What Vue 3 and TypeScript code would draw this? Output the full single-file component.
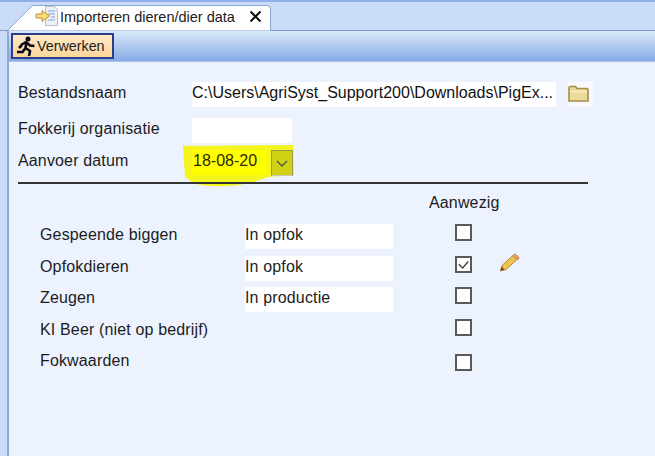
<template>
  <div class="screen">
    <div class="tabstrip">
      <div class="tab">
        <svg class="tab-shape" width="265" height="27" viewBox="0 0 265 27">
          <path d="M0.500 26.500L25.500 1.500H260Q263.500 1.500 263.500 5V26.500" fill="#fff" stroke="#8ba8d4" />
        </svg>
        <svg class="tab-icon" width="24" height="22" viewBox="0 0 24 22">
          <path d="M10.500 1.500h9l3 3v16h-12z" fill="#eef2f8" stroke="#b7bfcb" />
          <path d="M13 6h7M13 9h7M16 12h4M13 15h7" stroke="#7f9cc8" />
          <path d="M1 9h6V5.500l7.500 5.500L7 16.500V13H1z" fill="#f8d878" stroke="#c09430" />
        </svg>
        <span>Importeren dieren/dier data</span>
        <svg class="tab-close" width="13" height="13" viewBox="0 0 13 13">
          <path d="M1.500 1.500l10 10M11.500 1.500l-10 10" stroke="#111" stroke-width="2" />
        </svg>
      </div>
    </div>
    <div class="panel">
      <div class="toolbar">
        <button class="run-btn">
          <svg width="20" height="21" viewBox="0 0 20 21">
            <circle cx="12" cy="3" r="2.500" fill="#060618" />
            <path d="M5 9l5-3 4 3.500 4.500 0.500M10.500 6l-1 6 4.500 3-1 5M9.500 12l-3 4-5.500 0M6 9l-3 3" fill="none" stroke="#060618" stroke-width="2.600" />
          </svg>
          Verwerken
        </button>
      </div>
      <div class="content">
        <div class="form-row first">
          <label>Bestandsnaam</label>
          <div class="field file">C:\Users\AgriSyst_Support200\Downloads\PigEx...</div>
          <div class="folder-box">
            <svg width="21" height="18" viewBox="0 0 21 18">
              <path d="M1 16V3Q1 1.500 2.500 1.500h5L9 3.500h9.500Q20 3.500 20 5v11z" fill="#e8dc9a" stroke="#a98a45" stroke-width="1.600" />
              <path d="M2 6.500h17" stroke="#f7f0c4" stroke-width="1.400" />
            </svg>
          </div>
        </div>
        <div class="form-row second">
          <label>Fokkerij organisatie</label>
          <div class="field org"></div>
        </div>
        <div class="form-row date">
          <label>Aanvoer datum</label>
          <div class="date-wrap">
            <svg class="marker" width="120" height="50" viewBox="0 0 120 50">
              <path d="M3 4L113 3l1 30-26 2-18 6Q40 47 15 42L5 35z" fill="#f4f41e" />
              <rect x="12" y="8" width="75" height="25" fill="#ffff00" />
            </svg>
            <span class="date-text">18-08-20</span>
            <span class="date-btn">
              <svg width="12" height="7" viewBox="0 0 12 7">
                <path d="M1 1l5 5 5-5" fill="none" stroke="#555" stroke-width="1.400" />
              </svg>
            </span>
          </div>
        </div>
        <div class="divider"></div>
        <div class="present-head">Aanwezig</div>
        <div v-for="row in rows" :key="row.name" class="animal-row">
          <span class="animal-name">{{ row.name }}</span>
          <div class="animal-type" :class="{ empty: !row.type }">{{ row.type }}</div>
          <span class="check">
            <svg v-if="row.checked" width="15" height="13" viewBox="0 0 15 13">
              <path d="M2 6l4.500 4.500L13 3" fill="none" stroke="#444" stroke-width="1.600" />
            </svg>
          </span>
          <svg v-if="row.checked" class="pencil" width="21" height="19" viewBox="0 0 21 19">
            <path d="M3 12.500L14 2.500l4 4L7 16.500 1.500 18z" fill="#f3c24e" stroke="#b9863a" />
            <path d="M14 2.500l1-1q1-.8 2 0l2.500 2.500q.8 1 0 2L18 6.500z" fill="#f0a08a" stroke="#b9863a" />
            <path d="M1.500 18l1-4.500 3 3z" fill="#6b4b2a" />
          </svg>
        </div>
      </div>
    </div>
  </div>
</template>

<script setup lang="ts">
interface AnimalRow {
  name: string
  type: string
  checked: boolean
}

const rows: AnimalRow[] = [
  { name: 'Gespeende biggen', type: 'In opfok', checked: false },
  { name: 'Opfokdieren', type: 'In opfok', checked: true },
  { name: 'Zeugen', type: 'In productie', checked: false },
  { name: 'KI Beer (niet op bedrijf)', type: '', checked: false },
  { name: 'Fokwaarden', type: '', checked: false }
]
</script>

<style>
html, body {
  margin: 0;
  overflow: hidden;
}
</style>

<style scoped>
.screen {
  width: 655px;
  height: 456px;
  box-sizing: border-box;
  background: #c9dbf6;
  border-top: 2px solid #8fb0e6;
  font-family: "Liberation Sans", Arial, sans-serif;
  font-size: 16px;
  letter-spacing: 0.15px;
  color: #1c1c1c;
  display: flex;
  flex-direction: column;
  overflow: hidden;
}

.tabstrip {
  height: 28px;
  padding-left: 7px;
  display: flex;
  align-items: flex-end;
  border-bottom: 1px solid #7a9bd0;
}

.tab {
  position: relative;
  height: 26px;
  width: 264px;
  margin-bottom: -1px;
  padding-left: 53px;
  box-sizing: border-box;
  display: flex;
  align-items: center;
  font-size: 14.500px;
  letter-spacing: 0;
  white-space: nowrap;
}

.tab-shape {
  position: absolute;
  left: 0;
  bottom: 0;
}

.tab-icon {
  position: absolute;
  left: 28px;
  top: 0;
}

.tab span {
  position: relative;
  top: -1px;
}

.tab-close {
  position: absolute;
  left: 242px;
  top: 5px;
}

.panel {
  flex: 1;
  margin-left: 7px;
  border-left: 2px solid #8ba8d4;
  display: flex;
  flex-direction: column;
  min-height: 0;
}

.toolbar {
  height: 31px;
  box-sizing: border-box;
  padding: 2px 0 0 2px;
  background: linear-gradient(#dbe9fb, #84abe3);
  border-bottom: 1px solid #a9c2e8;
}

.run-btn {
  height: 26px;
  width: 103px;
  padding: 0 0 0 3px;
  box-sizing: border-box;
  display: flex;
  align-items: center;
  gap: 1px;
  font: inherit;
  font-size: 14.300px;
  letter-spacing: 0;
  color: #1c1c1c;
  background: linear-gradient(#fde9c4, #fdd69c);
  border: 2px solid #2c3d8c;
}

.content {
  flex: 1;
  background: #ecf3fe;
  padding-left: 9px;
}

.form-row {
  display: flex;
  align-items: flex-start;
  height: 25px;
  line-height: 21px;
}

.form-row.first {
  margin-top: 20px;
}

.form-row.second {
  margin-top: 11px;
}

.form-row.date {
  margin-top: 7px;
}

.form-row label {
  width: 174px;
}

.field {
  height: 25px;
  background: #fff;
}

.field.file {
  width: 364px;
  color: #111;
  letter-spacing: 0;
  white-space: nowrap;
}

.field.org {
  width: 100px;
}

.folder-box {
  width: 25px;
  height: 25px;
  margin-left: 12px;
  padding-top: 3px;
  box-sizing: border-box;
  background: #f7f9fe;
}

.date-wrap {
  position: relative;
  width: 100px;
  height: 25px;
}

.marker {
  position: absolute;
  left: -12px;
  top: -8px;
}

.date-text {
  position: relative;
  margin-left: 1px;
  letter-spacing: 0;
  color: #2a2a00;
}

.date-btn {
  position: absolute;
  right: -1px;
  top: 0;
  width: 22px;
  height: 26px;
  box-sizing: border-box;
  background: #d0d014;
  border: 1px solid #9a9a4a;
  border-bottom-color: #c8c8b0;
  display: flex;
  align-items: center;
  justify-content: center;
}

.divider {
  position: relative;
  width: 570px;
  height: 2px;
  margin-top: 7px;
  background: #333;
}

.present-head {
  margin: 10px 0 9px 411px;
  height: 18px;
  line-height: 18px;
}

.animal-row {
  height: 31.500px;
  display: flex;
  align-items: flex-start;
  padding: 3px 0 0 22px;
  box-sizing: border-box;
  line-height: 21px;
}

.animal-name {
  width: 205px;
}

.animal-type {
  width: 148px;
  height: 25px;
  background: #fff;
  color: #222;
}

.animal-type.empty {
  background: transparent;
}

.check {
  width: 17px;
  height: 17px;
  margin-left: 62px;
  box-sizing: border-box;
  border: 2px solid #5a5a5a;
  background: #fff;
  display: flex;
  align-items: center;
  justify-content: center;
}

.animal-row:last-child .check {
  margin-top: 4px;
}

.pencil {
  margin: -3px 0 0 27px;
}
</style>
